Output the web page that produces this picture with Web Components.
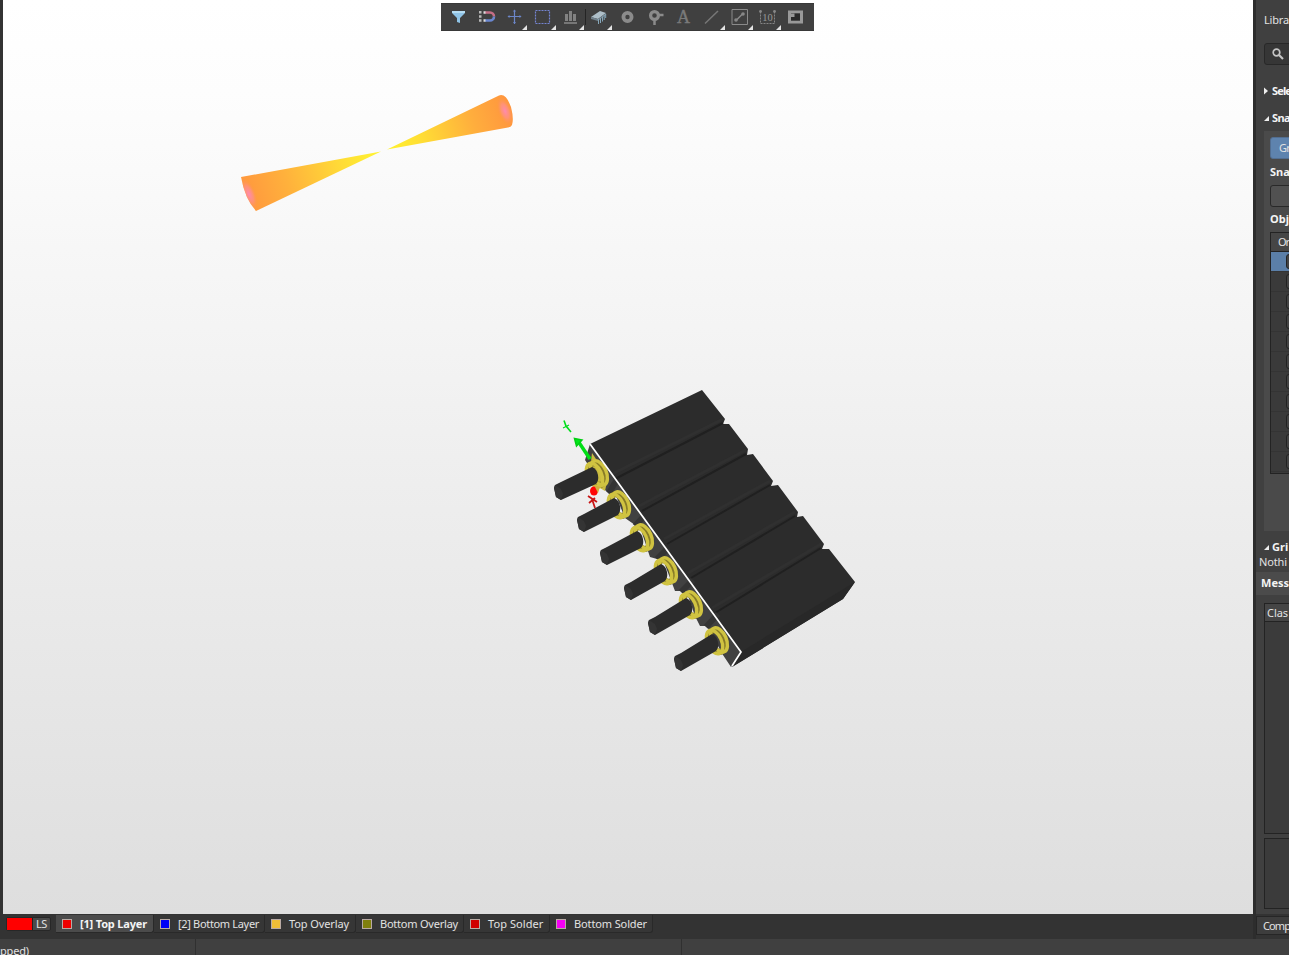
<!DOCTYPE html>
<html lang="en">
<head>
<meta charset="utf-8">
<title>PCB 3D view</title>
<style>
html,body{margin:0;height:100%;overflow:hidden;background:#333}
body{font-family:"Noto Sans","Open Sans",sans-serif;font-size:11px;color:#e2e2e2}
</style>
</head>
<body>
<pcb-app></pcb-app>
<script>
const define = (name, html, setup) => customElements.define(name, class extends HTMLElement {
  connectedCallback() {
    if (this.shadowRoot) return;
    const root = this.attachShadow({mode: 'open'});
    const t = document.createElement('template');
    t.innerHTML = typeof html === 'function' ? html(this) : html;
    root.append(t.content.cloneNode(true));
    if (setup) setup(this, root);
  }
});

/* text label; "fit" spreads the letters over the given width */
define('ui-label', `<style>:host{display:inline-block;white-space:nowrap;line-height:14px;flex:none}
:host([bold]){font-weight:700;color:#f4f4f4}</style><span><slot></slot></span>`, (el, root) => {
  const fit = +el.getAttribute('fit');
  if (!fit) return;
  const span = root.querySelector('span');
  const w = span.getBoundingClientRect().width;
  if (w) span.style.letterSpacing = ((fit - w) / el.textContent.length).toFixed(3) + 'px';
});

const ICONS = {
  filter: '<path d="M4 4h13v2l-5 5v5l-3-1v-4L4 6z" fill="#8fc3e6"/><path d="M4 4h13v2H4z" fill="#b5dcf2"/>',
  magnet: '<path d="M9 5.500h5a4 4 0 0 1 4 4" fill="none" stroke="#c56e86" stroke-width="2.600"/><path d="M18 9.500a4 4 0 0 1-4 4H9" fill="none" stroke="#6a87cf" stroke-width="2.600"/><path d="M7.500 4.200h2v2.600h-2zM7.500 12.200h2v2.600h-2z" fill="#ddd"/><path d="M3 4h2.500v2.500H3zM3 8.200h2.500v2.500H3zM3 12.300h2.500v2.500H3z" fill="#b9b9b9"/>',
  cross: '<path d="M10.500 3v14M4 9.500h13" stroke="#6c86c8" stroke-width="1.200"/><path d="M9 4.500l1.500-2 1.500 2zM9 15l1.500 2 1.500-2zM5.500 8l-2 1.500 2 1.500zM15.500 8l2 1.500-2 1.500z" fill="#6c86c8"/>',
  select: '<path d="M3.500 3.500h14v13h-14z" fill="none" stroke="#7484d2" stroke-width="1.200" stroke-dasharray="2 1"/>',
  align: '<path d="M4 16h13" stroke="#8a8a8a" stroke-width="1.500"/><path d="M5 7h3v7H5zM9 4h3v10H9zM13 7h3v7h-3z" fill="#828282"/>',
  chip: '<path d="M3 10l9-6 6 2-8 6z" fill="#aebfc9"/><path d="M3 10l7 2v2l-7-2zM10 12l8-6v2l-8 6z" fill="#71818c"/><path d="M10.500 12v5M12.500 11v5M14.500 9.500v5M16.200 8v5M17.700 7v4" stroke="#86a7ba"/>',
  pad: '<circle cx="10.500" cy="10" r="4.100" fill="none" stroke="#8b8b8b" stroke-width="3.800"/>',
  via: '<circle cx="9.500" cy="8.500" r="3.900" fill="none" stroke="#8b8b8b" stroke-width="3.200"/><path d="M13 8h5.500M9.500 12v6" stroke="#8b8b8b" stroke-width="2.500"/>',
  text: '<text x="10.500" y="16" text-anchor="middle" font-family="Liberation Serif,serif" font-size="18" fill="#7a7a7a" stroke="#7a7a7a" stroke-width=".4">A</text>',
  line: '<path d="M4 16.500L17 4" stroke="#777" stroke-width="1.500"/>',
  dimension: '<path d="M3 2.500h15.500v15H3z" fill="none" stroke="#8a8a8a"/><path d="M7 13.500l7-7" stroke="#8a8a8a" stroke-width="1.500"/><circle cx="7" cy="13" r="1.800" fill="#888"/><circle cx="14" cy="7" r="1.800" fill="#888"/>',
  coord: '<path d="M3.500 4.500v12h14v-12" fill="none" stroke="#858585" stroke-dasharray="2 1"/><circle cx="3.500" cy="4.500" r="1.400" fill="#888"/><circle cx="17.500" cy="4.500" r="1.400" fill="#888"/><text x="10.500" y="14" text-anchor="middle" font-family="Liberation Serif,serif" font-size="10.500" fill="#979797">10</text>',
  room: '<path d="M3 3.500h15v13H3zM6 6.500v7h9v-7z" fill="#999" fill-rule="evenodd"/><path d="M6 6.500h9v7H6z" fill="#2a2a2a"/><path d="M6 10h3.500V6.500H6z" fill="#999"/>'
};
define('tool-button', el => `<style>:host{display:flex;flex:1;position:relative;align-items:center;justify-content:center}
svg{display:block;flex:none;margin-bottom:2px}
.more{position:absolute;right:1px;bottom:0;width:0;height:0;border-left:5px solid transparent;border-bottom:5px solid #e4e4e4}
:host([separator])::after{content:"";position:absolute;right:-1px;top:5px;bottom:5px;width:1px;background:#242424}</style>
<svg width="21" height="19" viewBox="0 0 21 19">${ICONS[el.getAttribute('icon')]}</svg>${el.hasAttribute('menu') ? '<i class="more"></i>' : ''}`);

define('tool-bar', `<style>:host{display:flex;box-sizing:border-box;width:373px;height:28px;padding:0 4px 0 3px;background:#404040;border:1px solid #383838;border-width:1px 0}</style>
<tool-button icon="filter"></tool-button><tool-button icon="magnet"></tool-button><tool-button icon="cross" menu></tool-button>
<tool-button icon="select" menu></tool-button><tool-button icon="align" menu separator></tool-button><tool-button icon="chip" menu></tool-button>
<tool-button icon="pad"></tool-button><tool-button icon="via"></tool-button><tool-button icon="text"></tool-button>
<tool-button icon="line" menu></tool-button><tool-button icon="dimension" menu></tool-button><tool-button icon="coord" menu></tool-button><tool-button icon="room"></tool-button>`);

/* pin header: [ring centre x, y, lower tip x, y] */
const PINS = [[596,474,561,500],[618,505,584,532],[641,538,607,565],[665,571,631,600],[690,605,655,635],[716,641,681,671]];
const pin = ([x, y, tx, ty]) => {
  const ring = (dx, dy, rx, ry) => `<ellipse cx="${x+dx}" cy="${y+dy}" rx="${rx}" ry="${ry}" transform="rotate(-24 ${x+dx} ${y+dy})"/>`;
  return `<g fill="none" stroke="#877b27" stroke-width="6">${ring(1,0,6.5,11.5)}</g>
<g fill="none" stroke="#d0c341" stroke-width="3.400">${ring(3,-1,7.3,12.900)}${ring(-1.5,1,7,12.500)}</g>
<path d="M${tx-7} ${ty-12}L${tx-6} ${ty-15}L${tx} ${ty-18}L${x-4} ${y-7}Q${x+1} ${y-5} ${x+2} ${y+1}Q${x+3} ${y+7} ${x} ${y+10}L${tx} ${ty}L${tx-5} ${ty-3}z" fill="#2c2c2c"/>
<path d="M${tx-7} ${ty-12}L${tx-6} ${ty-15}L${tx} ${ty-11}L${tx+2} ${ty-6}L${tx} ${ty}L${tx-5} ${ty-3}z" fill="#343434"/>`;
};
const GROOVES = [[725,422,615,479],[748,453,642,511],[772,484,667,544],[797,515,691,578],[823,547,715,613]];
define('board-scene', `<style>:host{display:block}svg{display:block}</style>
<svg width="1250" height="914" viewBox="3 0 1250 914">
<defs>
<linearGradient id="c1" gradientUnits="userSpaceOnUse" x1="383" y1="151" x2="246" y2="195"><stop offset="0" stop-color="#fff62f"/><stop offset=".3" stop-color="#ffdc37"/><stop offset=".7" stop-color="#ffb13c"/><stop offset="1" stop-color="#ff983e"/></linearGradient>
<linearGradient id="c2" gradientUnits="userSpaceOnUse" x1="386" y1="150" x2="510" y2="110"><stop offset="0" stop-color="#fff32e"/><stop offset=".3" stop-color="#ffdc35"/><stop offset=".7" stop-color="#ffae3d"/><stop offset="1" stop-color="#ff963e"/></linearGradient>
<radialGradient id="p"><stop offset="0" stop-color="#ff8ab0"/><stop offset=".5" stop-color="#ff908a" stop-opacity=".7"/><stop offset="1" stop-color="#ff983e" stop-opacity="0"/></radialGradient>
<clipPath id="k1"><path d="M381 151.500L241 177Q245 199 256 211z"/></clipPath>
<clipPath id="k2"><path d="M387 149.500L499 95.500Q506 93 511 107Q514 119 512 125Q511 127 508 127.500z"/></clipPath>
</defs>
<g clip-path="url(#k1)"><path d="M235 90h155v125H235z" fill="url(#c1)"/><ellipse cx="249" cy="194" rx="7" ry="17" transform="rotate(-22 249 194)" fill="url(#p)"/></g>
<g clip-path="url(#k2)"><path d="M380 90h140v70H380z" fill="url(#c2)"/><ellipse cx="505" cy="111" rx="7" ry="15" transform="rotate(-20 505 111)" fill="url(#p)"/></g>
<path d="M590 444L702 390L725 419L723 424L729 424L748 449L747 455L753 454L773 481L771 486L778 485L798 512L797 517L803 516L824 544L822 549L829 549L855 582L843 599L732 667L741 652z" fill="#2c2c2c"/>
<path d="M741 652L855 582L843 599L732 667z" fill="#282828"/>
${GROOVES.map(([a,b,c,d]) => `<path d="M${a-2} ${b-3}L${c-3} ${d-5}" stroke="#303030" stroke-width="3"/><path d="M${a-2} ${b+1}L${c} ${d}" stroke="#202020" stroke-width="2"/>`).join('')}
<path d="M590 444L585 460L605 490L609 494L616 496L625 518L635 525L639 524L650 557L657 559L662 557L675 591L681 591L686 590L695 616L700 626L707 626L723 655L731 667L741 652z" fill="#414141"/>
<path d="M609 493L616 481M635 526L644 516M657 559L668 548M681 592L693 580M706 627L718 614" stroke="#343434" stroke-width="6"/>
<path d="M592 453L608 477L605 491L598 487L590 470z" fill="#cabb42"/>
${PINS.map(pin).join('')}
<path d="M590 444L741 652L732 666" fill="none" stroke="#fff" stroke-width="1.700"/>
<path d="M578 441L590 459" stroke="#00df16" stroke-width="3.500"/><path d="M574.500 438.500L582 440L576.500 446z" fill="#00e51a" stroke="#00ce12" stroke-width="1.500"/>
<path d="M564 420.500L566 426L571 432M566 426L568 428" fill="none" stroke="#00dd1b" stroke-width="1.600"/><path d="M563 428L569 425" stroke="#00dd1b" stroke-width="1.200"/>
<ellipse cx="594" cy="491" rx="4" ry="4.500" fill="#ff0606"/><path d="M594 485L600 487L598 493z" fill="#d3ae3e"/>
<path d="M588 496L597 502M589 503L595 498M592 499L595 508" stroke="#c81414" stroke-width="1.800"/>
</svg>`);

define('view-port', `<style>:host{display:flex;flex-direction:column;align-items:center;position:relative;width:1250px;height:914px;background:linear-gradient(#fff,#fdfdfd 10%,#efefef 50%,#dedede);overflow:hidden}
tool-bar{position:absolute;top:3px;left:438px}</style><board-scene></board-scene><tool-bar></tool-bar>`);

define('layer-tab', el => `<style>:host{display:flex;box-sizing:border-box;align-items:center;flex:none;height:18px;width:${el.getAttribute('width')}px;padding-left:6px;gap:8px;border:1px solid #292929;border-width:0 1px 1px 0;border-radius:0 0 3px 0;background:#363636}
:host([active]){background:#4b4b4b}i{box-sizing:border-box;width:10px;height:10px;border:1px solid #b9aaa4;background:${el.getAttribute('color')}}</style><i></i><slot></slot>`);
define('layer-bar', `<style>:host{display:flex;box-sizing:border-box;height:25px;padding:1px 0 0 6px;background:#333}
.set{display:flex;box-sizing:border-box;width:45px;height:14px;margin:2px 5px 0 0;background:#4a4a4a;border:1px solid #272727;border-radius:2px;align-items:center}.set i{width:25px;height:12px;background:#f00;border-right:1px solid #222;margin-right:3px}</style>
<div class="set"><i></i><ui-label fit="11">LS</ui-label></div>
<layer-tab active width="98" color="#f00000"><ui-label bold fit="67">[1] Top Layer</ui-label></layer-tab>
<layer-tab width="111" color="#0000f6"><ui-label fit="81">[2] Bottom Layer</ui-label></layer-tab>
<layer-tab width="91" color="#efbd37"><ui-label fit="60">Top Overlay</ui-label></layer-tab>
<layer-tab width="108" color="#80800e"><ui-label fit="78">Bottom Overlay</ui-label></layer-tab>
<layer-tab width="86" color="#d00000"><ui-label fit="55.500">Top Solder</ui-label></layer-tab>
<layer-tab width="103" color="#f500f5"><ui-label fit="73">Bottom Solder</ui-label></layer-tab>`);
define('status-bar', `<style>:host{display:flex;height:16px;background:#404040;overflow:hidden}div{box-sizing:border-box;border-right:1px solid #303030;padding-top:5px;height:16px}.a{width:196px}.b{width:486px}ui-label{height:11px;display:block}</style>
<div class="a"><ui-label fit="29">pped)</ui-label></div><div class="b"></div>`);

define('section-title', el => `<style>:host{display:flex;align-items:center;gap:3px;height:14px}svg{display:block;flex:none}</style>
<svg width="5" height="8" viewBox="0 0 5 8"><path d="${el.hasAttribute('open') ? 'M5 2v5H0z' : 'M0 0.500L4 4L0 7.500z'}" fill="#eee"/></svg><slot></slot>`);
define('object-table', `<style>:host{display:block;box-sizing:border-box;flex:none;width:60px;height:242px;border:1px solid #232323;background:#3a3a3a}
.h{height:18px;padding-left:7px;display:flex;align-items:center;border-bottom:1px solid #232323;background:#464646}
.r{height:19px;border-bottom:1px solid #343434;display:flex;align-items:center;padding-left:15px}.first{background:#5b7fa8}
.r i{width:14px;height:13px;border:1px solid #222;border-radius:3px;background:#444}</style>
<div class="h"><ui-label fit="11">Or</ui-label></div><div class="r first"><i></i></div>${'<div class="r"><i></i></div>'.repeat(10)}`);
define('properties-panel', `<style>:host{display:flex;flex-direction:column;box-sizing:border-box;height:572px;padding:13px 0 0 8px;background:#404040}
.search{box-sizing:border-box;width:60px;height:22px;margin:16px 0 19px;border:1px solid #282828;border-radius:3px;background:#363636;padding:4px 7px}
.search svg{display:block}.group{box-sizing:border-box;height:400px;padding:6px 0 0 6px;background:#4a4a4a;margin:6px 0 9px;display:flex;flex-direction:column}
.btn{box-sizing:border-box;height:22px;width:60px;border-radius:3px;background:#5e83ae;padding:2px 8px;border:1px solid #526e91;margin-bottom:6px}
.input{box-sizing:border-box;width:60px;height:22px;margin:6px 0 5px;border:1px solid #292929;border-radius:3px;background:#515151}
object-table{margin-top:6px}.note{margin:1px 0 0 -5px}section-title+section-title{margin-top:13px}</style>
<ui-label fit="25">Libra</ui-label>
<div class="search"><svg width="12" height="12" viewBox="0 0 12 12"><circle cx="4.500" cy="4.500" r="3.300" fill="none" stroke="#c4c4c4" stroke-width="1.700"/><path d="M7 7l4 4" stroke="#c4c4c4" stroke-width="2.200"/></svg></div>
<section-title><ui-label bold fit="19">Sele</ui-label></section-title>
<section-title open><ui-label bold fit="18">Sna</ui-label></section-title>
<div class="group"><div class="btn"><ui-label fit="11">Gr</ui-label></div><ui-label bold>Sna</ui-label><div class="input"></div><ui-label bold>Obj</ui-label><object-table></object-table></div>
<section-title open><ui-label bold>Gri</ui-label></section-title><ui-label class="note" fit="28">Nothi</ui-label>`);
define('messages-panel', `<style>:host{display:block;height:342px;background:#404040;box-sizing:border-box}
.title{box-sizing:border-box;height:23px;background:#4b4b4b;padding:4px 0 0 5px}.title ui-label{display:block}
.list,.detail{box-sizing:border-box;width:60px;margin-left:8px;border:1px solid #232323;background:#3b3b3b}.list{height:231px;margin-top:8px}.detail{height:71px;margin-top:4px}
.head{height:17px;border-bottom:1px solid #232323;background:#454545;padding-left:2px;display:flex;align-items:center}</style>
<div class="title"><ui-label bold fit="28">Mess</ui-label></div><div class="list"><div class="head"><ui-label fit="21">Clas</ui-label></div></div><div class="detail"></div>`);
define('side-panel', `<style>:host{display:block;box-sizing:border-box;width:36px;height:939px;border-left:3px solid #2d2d2d;background:#333;overflow:hidden}
.tab{box-sizing:border-box;height:19px;width:60px;margin-top:2px;border:1px solid #262626;background:#3d3d3d;padding:1px 0 0 6px}</style>
<properties-panel></properties-panel><messages-panel></messages-panel><div class="tab"><ui-label fit="27">Comp</ui-label></div>`);

define('pcb-app', `<style>:host{display:block;width:1289px;height:955px;overflow:hidden}.top{display:flex;height:939px}
.main{box-sizing:border-box;width:1253px}view-port{margin-left:3px}.main{background:#333}</style>
<div class="top"><div class="main"><view-port></view-port><layer-bar></layer-bar></div><side-panel></side-panel></div><status-bar></status-bar>`);
</script>
</body>
</html>
